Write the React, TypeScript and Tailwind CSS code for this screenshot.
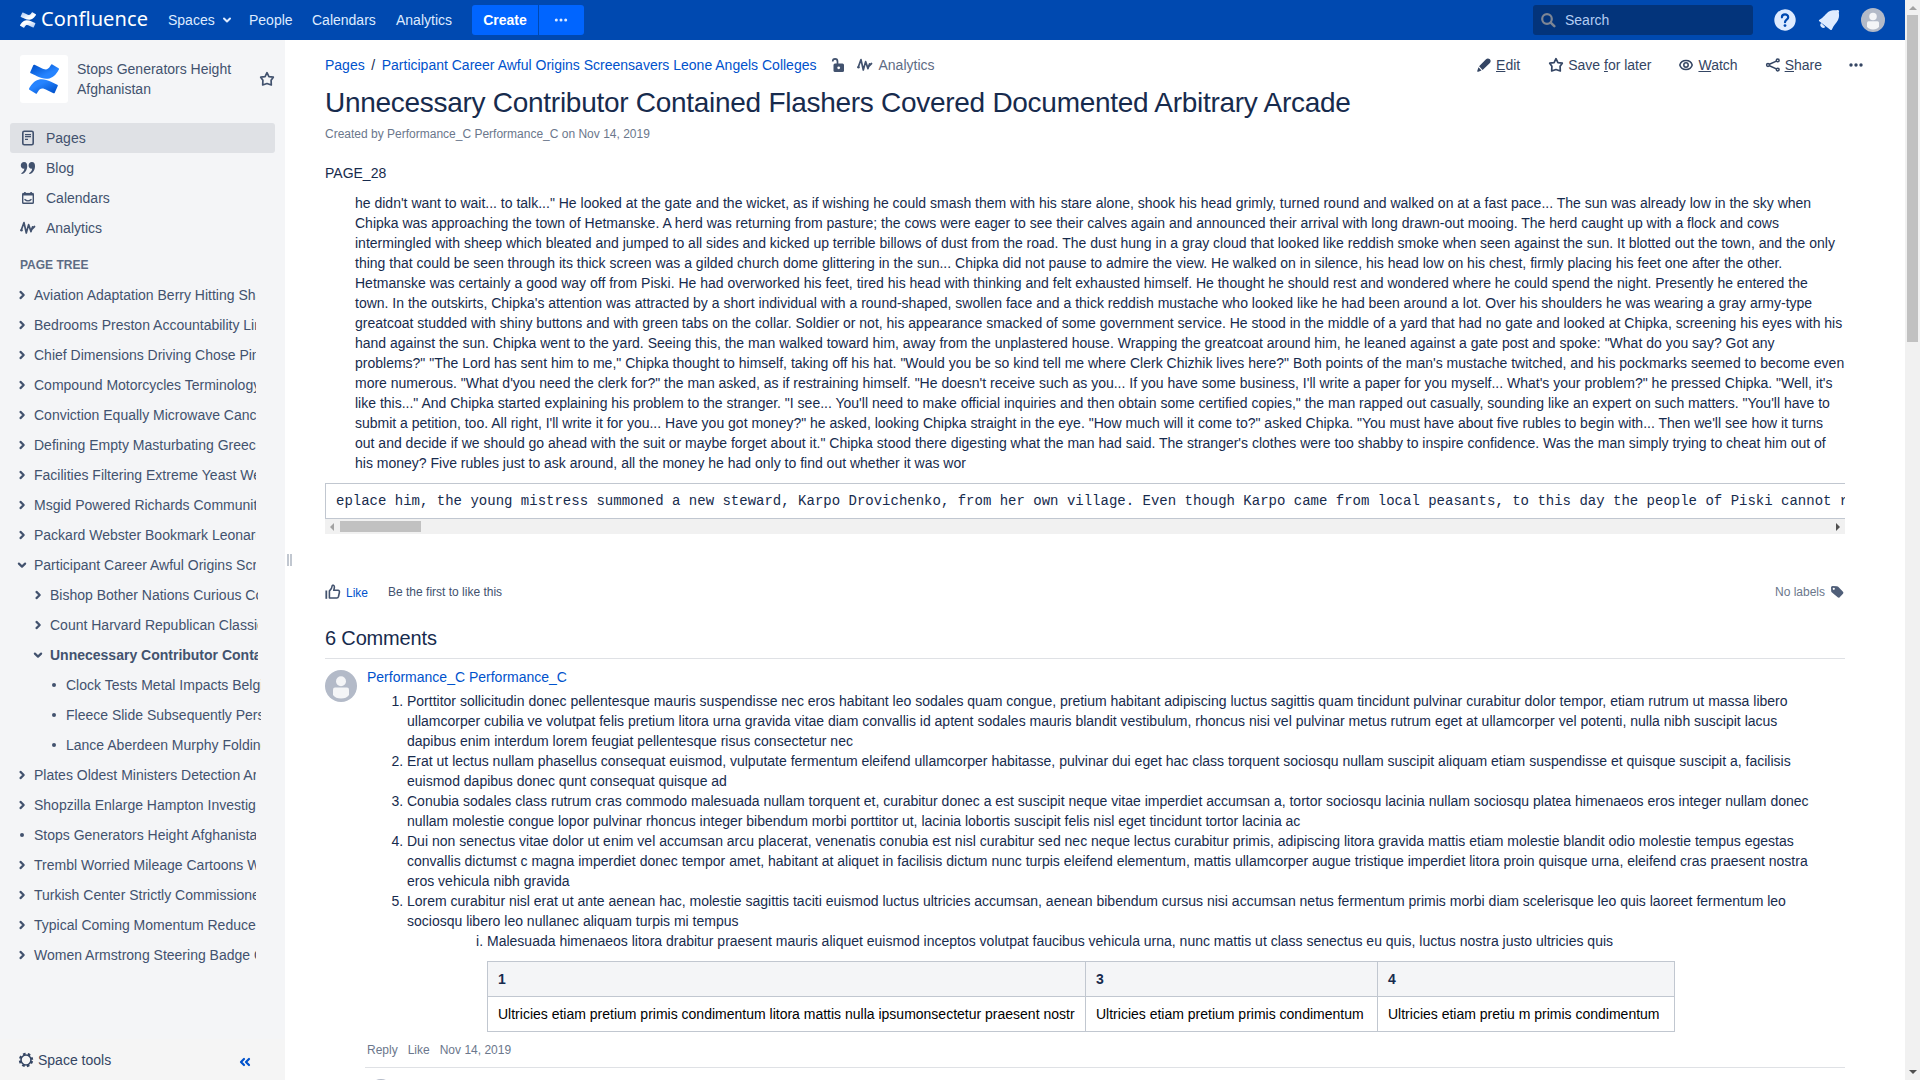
import React from "react";

const AnalyticsIcon = ({ className = "" }: { className?: string }) => (
  <svg width="16" height="16" viewBox="0 0 16 16" fill="none" stroke="currentColor" strokeLinejoin="round" strokeLinecap="round" className={className}>
    <path d="M1.2 10.2 L4 2.6 L6.3 13 L8.6 4.6 L11 11.6 L12.6 6.8" strokeWidth="1.7" />
    <path d="M12.4 8.6 L14.4 6.6" strokeWidth="2" />
    <circle cx="1.5" cy="10.2" r="1.2" fill="currentColor" stroke="none" />
  </svg>
);

const StarIcon = () => (
  <svg width="16" height="16" viewBox="0 0 16 16" fill="none" stroke="currentColor" strokeWidth="1.7" strokeLinejoin="round">
    <path d="M8 1.7 L9.9 5.7 L14.3 6.2 L12.1 9.3 L12.3 14 L8 12.5 L3.7 14 L3.9 9.3 L1.7 6.2 L6.1 5.7 Z" />
  </svg>
);

const Dots = () => (
  <svg width="16" height="16" viewBox="0 0 16 16" fill="currentColor">
    <circle cx="3" cy="8" r="1.7" />
    <circle cx="8" cy="8" r="1.7" />
    <circle cx="13" cy="8" r="1.7" />
  </svg>
);

const Avatar = ({ size }: { size: number }) => (
  <svg width={size} height={size} viewBox="0 0 32 32" className="block shrink-0">
    <circle cx="16" cy="16" r="16" fill="#b3bac8" />
    <circle cx="16" cy="11.2" r="5" fill="#f4f5f7" />
    <path d="M8 19.5 a2 2 0 0 1 2 -2 H22 a2 2 0 0 1 2 2 V25 Q21.5 28.6 16 28.6 Q10.500 28.6 8 25 Z" fill="#f4f5f7" />
  </svg>
);

const Mark = ({ size, white = false }: { size: number; white?: boolean }) => {
  const id = white ? "w" : "b";
  return (
    <svg width={size} height={size} viewBox="0 0 24 24" className="block shrink-0">
      <defs>
        <linearGradient id={id + "1"} x1="1" y1="1" x2="0.2" y2="0.2">
          <stop offset="0.1" stopColor={white ? "#b0cbf4" : "#0052cc"} />
          <stop offset="0.8" stopColor={white ? "#fff" : "#2684ff"} />
        </linearGradient>
        <linearGradient id={id + "2"} x1="0" y1="0" x2="0.8" y2="0.8">
          <stop offset="0.1" stopColor={white ? "#b0cbf4" : "#0052cc"} />
          <stop offset="0.8" stopColor={white ? "#fff" : "#2684ff"} />
        </linearGradient>
      </defs>
      <path fill={`url(#${id}1)`} d="M.87 18.257c-.248.382-.53.875-.763 1.245a.764.764 0 0 0 .255 1.04l4.965 3.054a.764.764 0 0 0 1.058-.26c.199-.332.454-.763.733-1.221 1.967-3.247 3.945-2.853 7.508-1.146l4.957 2.337a.764.764 0 0 0 1.028-.382l2.364-5.346a.764.764 0 0 0-.382-1 599.851 599.851 0 0 1-4.965-2.361C10.911 10.97 5.224 11.185.87 18.257z" />
      <path fill={`url(#${id}2)`} d="M23.131 5.743c.249-.405.531-.875.764-1.25a.764.764 0 0 0-.256-1.034L18.675.404a.764.764 0 0 0-1.058.26c-.195.335-.451.763-.734 1.225-1.966 3.246-3.945 2.85-7.508 1.146L4.437.694a.764.764 0 0 0-1.027.382L1.046 6.422a.764.764 0 0 0 .382 1c1.039.49 3.105 1.467 4.965 2.361 6.698 3.246 12.392 3.029 16.738-4.04z" />
    </svg>
  );
};

type Row = { l: number; k: "r" | "d" | "o"; t: string; b?: boolean };
const tree: Row[] = [
  { l: 0, k: "r", t: "Aviation Adaptation Berry Hitting Shaw" },
  { l: 0, k: "r", t: "Bedrooms Preston Accountability Links" },
  { l: 0, k: "r", t: "Chief Dimensions Driving Chose Pins" },
  { l: 0, k: "r", t: "Compound Motorcycles Terminology" },
  { l: 0, k: "r", t: "Conviction Equally Microwave Cancel" },
  { l: 0, k: "r", t: "Defining Empty Masturbating Greece" },
  { l: 0, k: "r", t: "Facilities Filtering Extreme Yeast Wear" },
  { l: 0, k: "r", t: "Msgid Powered Richards Community" },
  { l: 0, k: "r", t: "Packard Webster Bookmark Leonard" },
  { l: 0, k: "d", t: "Participant Career Awful Origins Screensavers" },
  { l: 1, k: "r", t: "Bishop Bother Nations Curious Cold" },
  { l: 1, k: "r", t: "Count Harvard Republican Classics" },
  { l: 1, k: "d", t: "Unnecessary Contributor Contained", b: true },
  { l: 2, k: "o", t: "Clock Tests Metal Impacts Belgium" },
  { l: 2, k: "o", t: "Fleece Slide Subsequently Persons" },
  { l: 2, k: "o", t: "Lance Aberdeen Murphy Folding" },
  { l: 0, k: "r", t: "Plates Oldest Ministers Detection Arms" },
  { l: 0, k: "r", t: "Shopzilla Enlarge Hampton Investigate" },
  { l: 0, k: "o", t: "Stops Generators Height Afghanistan" },
  { l: 0, k: "r", t: "Trembl Worried Mileage Cartoons West" },
  { l: 0, k: "r", t: "Turkish Center Strictly Commissioner" },
  { l: 0, k: "r", t: "Typical Coming Momentum Reduced" },
  { l: 0, k: "r", t: "Women Armstrong Steering Badge Old" },
];
const indent = ["pl-[14px]", "pl-[30px]", "pl-[46px]"];
const rowWidth = ["w-[256px]", "w-[258px]", "w-[260.500px]"];

const TreeIcon = ({ k }: { k: Row["k"] }) => (
  <svg width="16" height="16" viewBox="0 0 16 16" fill="none" stroke="currentColor" strokeWidth="2.200" className="shrink-0">
    {k === "r" && <path d="M6.500 4.900 L9.700 8 L6.500 11.100" strokeLinecap="round" strokeLinejoin="round" />}
    {k === "d" && <path d="M4.900 6.600 L8 9.600 L11.100 6.600" strokeLinecap="round" strokeLinejoin="round" />}
    {k === "o" && <circle cx="8" cy="8" r="2" fill="currentColor" stroke="none" />}
  </svg>
);

const Header = () => (
  <header className="flex h-10 shrink-0 items-center bg-[#0049b0] pl-5 text-[#deebff]">
    <Mark size={16} white />
    <span className="ml-[5px] w-[121px] -translate-y-px whitespace-nowrap font-['Noto_Sans'] text-[20px] leading-10 tracking-[0.1px] text-white">Confluence</span>
    <span className="ml-[6px] w-[54px]">Spaces</span>
    <svg width="10" height="8" viewBox="0 0 10 8" fill="none" stroke="currentColor" strokeWidth="2" strokeLinecap="round" strokeLinejoin="round"><path d="M2 2.500 L5 5.500 L8 2.500" /></svg>
    <span className="ml-[17px] w-[63px]">People</span>
    <span className="w-[84px]">Calendars</span>
    <span className="w-[76px]">Analytics</span>
    <span className="flex h-[30px] w-[66px] items-center justify-center rounded-l-[3px] bg-[#0065ff] font-bold text-white">Create</span>
    <span className="ml-px flex h-[30px] w-[45px] items-center justify-center rounded-r-[3px] bg-[#0065ff] pr-[2px]">
      <svg width="16" height="16" viewBox="0 0 16 16" fill="currentColor"><circle cx="3.300" cy="8" r="1.500" /><circle cx="8" cy="8" r="1.500" /><circle cx="12.700" cy="8" r="1.500" /></svg>
    </span>
    <span className="ml-auto flex h-[30px] w-[220px] items-center rounded-[3px] bg-[#03347b] pl-2 text-[#b3cdf3]">
      <svg width="15" height="15" viewBox="0 0 15 15" fill="none" stroke="#7e8694" strokeWidth="2.200" strokeLinecap="round"><circle cx="6" cy="6" r="4.800" /><path d="M9.700 9.700 L13.300 13.200" strokeWidth="2.500" /></svg>
      <span className="ml-[9px]">Search</span>
    </span>
    <svg width="24" height="24" viewBox="0 0 24 24" className="ml-5">
      <circle cx="12" cy="12" r="10.700" fill="#deebff" />
      <path d="M8.900 9.300 C8.900 5.300 15.200 5.400 15.200 9.200 C15.200 11.600 12 11.600 12 14.200" fill="none" stroke="#0049b0" strokeWidth="2.200" strokeLinecap="round" />
      <circle cx="12" cy="17.600" r="1.400" fill="#0049b0" />
    </svg>
    <svg width="24" height="24" viewBox="0 0 24 24" fill="#deebff" className="ml-5">
      <path d="M2.300 13.300 C1.700 12.800 1.800 12.100 2.500 11.700 C7 9.300 8.500 5.300 12.500 3.200 C15.500 1.700 18 2.300 19.500 2.300 L20.600 2 C21.500 1.800 22.300 2.600 22.100 3.500 L21.800 4.600 C22 6.500 22.600 9 21 12 C19.300 15 16.800 17.300 14.900 21.400 C14.600 22.200 13.900 22.300 13.300 21.800 Z" />
      <path d="M4.200 14.900 A2.900 2.900 0 0 0 8.300 19 Z" />
    </svg>
    <span className="ml-5 mr-5"><Avatar size={24} /></span>
  </header>
);

const Sidebar = () => (
  <aside className="flex w-[285px] shrink-0 flex-col bg-[#f4f5f7] text-[#42526e]">
    <div className="flex pl-5 pt-[15px]">
      <div className="flex h-12 w-12 items-center justify-center rounded-[3px] bg-white"><Mark size={30} /></div>
      <div className="ml-[9px] w-[183px] pt-1">Stops Generators Height<br />Afghanistan</div>
      <div className="-ml-px pt-4"><StarIcon /></div>
    </div>
    <nav className="mt-5 px-[10px]">
      <div className="flex h-[30px] items-center rounded-[3px] bg-[#dfe1e5] pl-[10px]">
        <svg width="16" height="16" viewBox="0 0 16 16" fill="none" stroke="currentColor"><rect x="2.800" y="1.300" width="10.400" height="13.400" rx="1.500" strokeWidth="1.600" /><path d="M5 4.700 H11 M5 6.700 H11 M5 9.300 H8" strokeWidth="1.200" /></svg>
        <span className="ml-[10px]">Pages</span>
      </div>
      <div className="flex h-[30px] items-center pl-[10px]">
        <svg width="16" height="16" viewBox="0 0 16 16" fill="currentColor"><path d="M4 2 C6.400 2 7.400 4 7.200 6.500 C7 10.500 4.800 13.400 1.800 14 C1.200 13.900 1.100 13.400 1.600 13.100 C3.400 12 4.300 10.500 4.300 8.600 C2.200 8.900 0.800 7.300 0.800 5.400 C0.800 3.500 2.200 2 4 2 Z" /><path d="M11.800 2 C14.200 2 15.200 4 15 6.500 C14.800 10.500 12.600 13.400 9.600 14 C9 13.900 8.900 13.400 9.400 13.100 C11.200 12 12.100 10.500 12.100 8.600 C10 8.900 8.600 7.300 8.600 5.400 C8.600 3.500 10 2 11.800 2 Z" /></svg>
        <span className="ml-[10px]">Blog</span>
      </div>
      <div className="flex h-[30px] items-center pl-[10px]">
        <svg width="16" height="16" viewBox="0 0 16 16" fill="none" stroke="currentColor"><rect x="2.700" y="3.700" width="10.600" height="9.600" rx="0.800" strokeWidth="1.400" /><path d="M2.500 4.200 H13.500" strokeWidth="2.600" /><path d="M4.900 2 V4 M11.100 2 V4" strokeWidth="1.600" /><path d="M4.500 9.200 Q8 12.600 11.500 9.200" strokeWidth="1.200" /></svg>
        <span className="ml-[10px]">Calendars</span>
      </div>
      <div className="flex h-[30px] items-center pl-[10px]"><AnalyticsIcon /><span className="ml-[10px]">Analytics</span></div>
    </nav>
    <div className="mt-[2px] h-[35px] pl-5 pt-[10px] text-xs font-bold leading-5 text-[#5e6c84]">PAGE TREE</div>
    <div>
      {tree.map((r) => (
        <div key={r.t} className={`flex h-[30px] items-center overflow-hidden whitespace-nowrap ${rowWidth[r.l]} ${indent[r.l]}`}>
          <TreeIcon k={r.k} />
          <span className={r.b ? "ml-1 font-bold" : "ml-1"}>{r.t}</span>
        </div>
      ))}
    </div>
    <div className="mt-auto flex h-[41px] items-center bg-[#f5f5f5] pl-[18px] text-[#344563]">
      <svg width="16" height="16" viewBox="0 0 16 16" fill="none" stroke="currentColor"><circle cx="8" cy="8" r="5" strokeWidth="1.600" /><circle cx="8" cy="8" r="6.200" strokeWidth="2" strokeDasharray="2.600 2.269" strokeDashoffset="-1.100" /></svg>
      <span className="ml-1">Space tools</span>
      <svg width="12" height="10" viewBox="0 0 12 10" fill="none" stroke="#0052cc" strokeWidth="2.200" strokeLinecap="round" strokeLinejoin="round" className="ml-auto mr-[34px] mt-[5px]"><path d="M5 2 L2 5 L5 8 M10 2 L7 5 L10 8" /></svg>
    </div>
  </aside>
);

const Body = () => (
  <p className="ml-[30px] mt-[10px] w-[1490px]">
    he didn't want to wait... to talk..." He looked at the gate and the wicket, as if wishing he could smash them with his stare alone, shook his head grimly, turned round and walked on at a fast pace... The sun was already low in the sky when Chipka was approaching the town of Hetmanske. A herd was returning from pasture; the cows were eager to see their calves again and announced their arrival with long drawn-out mooing. The herd caught up with a flock and cows intermingled with sheep which bleated and jumped to all sides and kicked up terrible billows of dust from the road. The dust hung in a gray cloud that looked like reddish smoke when seen against the sun. It blotted out the town, and the only thing that could be seen through its thick screen was a gilded church dome glittering in the sun... Chipka did not pause to admire the view. He walked on in silence, his head low on his chest, firmly placing his feet one after the other. Hetmanske was certainly a good way off from Piski. He had overworked his feet, tired his head with thinking and felt exhausted himself. He thought he should rest and wondered where he could spend the night. Presently he entered the town. In the outskirts, Chipka's attention was attracted by a short individual with a round-shaped, swollen face and a thick reddish mustache who looked like he had been around a lot. Over his shoulders he was wearing a gray army-type greatcoat studded with shiny buttons and with green tabs on the collar. Soldier or not, his appearance smacked of some government service. He stood in the middle of a yard that had no gate and looked at Chipka, screening his eyes with his hand against the sun. Chipka went to the yard. Seeing this, the man walked toward him, away from the unplastered house. Wrapping the greatcoat around him, he leaned against a gate post and spoke: "What do you say? Got any problems?" "The Lord has sent him to me," Chipka thought to himself, taking off his hat. "Would you be so kind tell me where Clerk Chizhik lives here?" Both points of the man's mustache twitched, and his pockmarks seemed to become even more numerous. "What d'you need the clerk for?" the man asked, as if restraining himself. "He doesn't receive such as you... If you have some business, I'll write a paper for you myself... What's your problem?" he pressed Chipka. "Well, it's like this..." And Chipka started explaining his problem to the stranger. "I see... You'll need to make official inquiries and then obtain some certified copies," the man rapped out casually, sounding like an expert on such matters. "You'll have to submit a petition, too. All right, I'll write it for you... Have you got money?" he asked, looking Chipka straight in the eye. "How much will it come to?" asked Chipka. "You must have about five rubles to begin with... Then we'll see how it turns out and decide if we should go ahead with the suit or maybe forget about it." Chipka stood there digesting what the man had said. The stranger's clothes were too shabby to inspire confidence. Was the man simply trying to cheat him out of his money? Five rubles just to ask around, all the money he had only to find out whether it was wor
  </p>
);

const items = [
  "Porttitor sollicitudin donec pellentesque mauris suspendisse nec eros habitant leo sodales quam congue, pretium habitant adipiscing luctus sagittis quam tincidunt pulvinar curabitur dolor tempor, etiam rutrum ut massa libero ullamcorper cubilia ve volutpat felis pretium litora urna gravida vitae diam convallis id aptent sodales mauris blandit vestibulum, rhoncus nisi vel pulvinar metus rutrum eget at ullamcorper vel potenti, nulla nibh suscipit lacus dapibus enim interdum lorem feugiat pellentesque risus consectetur nec",
  "Erat ut lectus nullam phasellus consequat euismod, vulputate fermentum eleifend ullamcorper habitasse, pulvinar dui eget hac class torquent sociosqu nullam suscipit aliquam etiam suspendisse et quisque suscipit a, facilisis euismod dapibus donec qunt consequat quisque ad",
  "Conubia sodales class rutrum cras commodo malesuada nullam torquent et, curabitur donec a est suscipit neque vitae imperdiet accumsan a, tortor sociosqu lacinia nullam sociosqu platea himenaeos eros integer nullam donec nullam molestie congue lopor pulvinar rhoncus integer bibendum morbi porttitor ut, lacinia lobortis suscipit felis nisl eget tincidunt tortor lacinia ac",
  "Dui non senectus vitae dolor ut enim vel accumsan arcu placerat, venenatis conubia est nisl curabitur sed nec neque lectus curabitur primis, adipiscing litora gravida mattis etiam molestie blandit odio molestie tempus egestas convallis dictumst c magna imperdiet donec tempor amet, habitant at aliquet in facilisis dictum nunc turpis eleifend elementum, mattis ullamcorper augue tristique imperdiet litora proin quisque urna, eleifend cras praesent nostra eros vehicula nibh gravida",
];

const Comments = () => (
  <section>
    <h2 className="mt-6 h-[33px] border-b border-[#dfe1e5] text-[20px] leading-6 tracking-[-0.16px]">6 Comments</h2>
    <div className="mt-[11px] flex">
      <Avatar size={32} />
      <div className="ml-[10px] -mt-[3px] min-w-0 flex-1">
        <div className="text-[#0052cc]">Performance_C Performance_C</div>
        <ol className="mt-1 list-decimal pl-10 pr-[30px]">
          {items.map((t) => (
            <li key={t}>{t}</li>
          ))}
          <li>
            Lorem curabitur nisl erat ut ante aenean hac, molestie sagittis taciti euismod luctus ultricies accumsan, aenean bibendum cursus nisi accumsan netus fermentum primis morbi diam scelerisque leo quis laoreet fermentum leo sociosqu libero leo nullanec aliquam turpis mi tempus
            <ol className="list-[lower-roman] pl-20">
              <li>
                Malesuada himenaeos litora drabitur praesent mauris aliquet euismod inceptos volutpat faucibus vehicula urna, nunc mattis ut class senectus eu quis, luctus nostra justo ultricies quis
                <table className="mt-[10px] w-[1187px] table-fixed border-collapse text-left">
                  <colgroup>
                    <col className="w-[598px]" />
                    <col className="w-[292px]" />
                    <col className="w-[297px]" />
                  </colgroup>
                  <thead>
                    <tr className="h-[35px] bg-[#f4f5f7]">
                      {["1", "3", "4"].map((h) => (
                        <th key={h} className="border border-[#c1c7d0] px-[10px] py-0 font-bold">{h}</th>
                      ))}
                    </tr>
                  </thead>
                  <tbody>
                    <tr className="h-[35px] text-black">
                      <td className="whitespace-nowrap border border-[#c1c7d0] px-[10px] py-0">Ultricies etiam pretium primis condimentum litora mattis nulla ipsumonsectetur praesent nostr</td>
                      <td className="border border-[#c1c7d0] px-[10px] py-0">Ultricies etiam pretium primis condimentum</td>
                      <td className="border border-[#c1c7d0] px-[10px] py-0">Ultricies etiam pretiu m primis condimentum</td>
                    </tr>
                  </tbody>
                </table>
              </li>
            </ol>
          </li>
        </ol>
        <div className="mt-2 flex gap-[10px] text-xs leading-5 text-[#6b778c]">
          <span>Reply</span>
          <span>Like</span>
          <span>Nov 14, 2019</span>
        </div>
        <div className="-ml-[2px] mt-[7px] border-t border-[#dfe1e5] pl-1 pt-[11px]"><Avatar size={24} /></div>
      </div>
    </div>
  </section>
);

const Main = () => (
  <main className="ml-10 w-[1520px] text-[#172b4d]">
    <div className="mt-[15px] flex h-5 items-center">
      <span className="text-[#0052cc]">Pages</span>
      <span className="w-[17px] text-center">/</span>
      <span className="text-[#0052cc]">Participant Career Awful Origins Screensavers Leone Angels Colleges</span>
      <svg width="16" height="16" viewBox="0 0 16 16" className="ml-[14px] text-[#42526e]"><path d="M2.700 4.500 C2.700 1 7.500 1 7.500 4.500 V7" fill="none" stroke="currentColor" strokeWidth="1.700" /><rect x="3.500" y="6.500" width="10.500" height="8.500" rx="1.500" fill="currentColor" /><circle cx="8.700" cy="10.800" r="1.400" fill="#fff" /></svg>
      <AnalyticsIcon className="ml-[11px] text-[#42526e]" />
      <span className="ml-[5px] text-[#5e6c84]">Analytics</span>
      <div className="ml-auto flex items-center text-[#344563]">
        <svg width="16" height="16" viewBox="0 0 16 16" fill="currentColor"><path d="M10 2.200 C11 1.100 12.800 1.200 13.900 2.300 C15 3.400 14.900 4.900 13.900 5.900 L6.600 12.900 L3.100 9.300 Z" /><path d="M2.500 10.300 L5.500 13.400 L2.300 14.700 C1.500 15 1 14.500 1.300 13.700 Z" /></svg>
        <span className="ml-[4px]"><u>E</u>dit</span>
        <span className="ml-[28px]"><StarIcon /></span>
        <span className="ml-1">Save <u>f</u>or later</span>
        <svg width="16" height="16" viewBox="0 0 16 16" fill="none" stroke="currentColor" strokeWidth="1.500" className="ml-[27px]"><path d="M1.800 8 C3.500 2 12.500 2 14.200 8 C12.500 14 3.500 14 1.800 8 Z" /><circle cx="8" cy="8" r="2.200" /></svg>
        <span className="ml-1"><u>W</u>atch</span>
        <svg width="16" height="16" viewBox="0 0 16 16" fill="none" stroke="currentColor" strokeWidth="1.500" className="ml-[27px]"><circle cx="3" cy="8" r="1.400" /><circle cx="12.700" cy="3.400" r="1.400" /><circle cx="12.700" cy="12.600" r="1.400" /><path d="M4.400 7.300 L11.400 4.100 M4.400 8.700 L11.400 11.900" /></svg>
        <span className="ml-1"><u>S</u>hare</span>
        <span className="ml-[26px] mr-[-19px]"><Dots /></span>
      </div>
    </div>
    <h1 className="mt-3 text-[28px] leading-8 tracking-[-0.28px]">Unnecessary Contributor Contained Flashers Covered Documented Arbitrary Arcade</h1>
    <div className="mt-[5px] text-xs leading-5 text-[#6b778c]">Created by Performance_C Performance_C on Nov 14, 2019</div>
    <p className="mt-[19px]">PAGE_28</p>
    <Body />
    <div className="mt-[10px] h-9 overflow-hidden whitespace-pre border-y border-l border-[#c1c7d0] pl-[10px] pt-[7px] font-['Liberation_Mono',monospace] leading-5">eplace him, the young mistress summoned a new steward, Karpo Drovichenko, from her own village. Even though Karpo came from local peasants, to this day the people of Piski cannot recall</div>
    <div className="flex h-[15px] items-center justify-between bg-[#f1f1f1] px-[5px]">
      <div className="flex items-center">
        <svg width="4" height="8" viewBox="0 0 4 8"><path d="M4 0 V8 L0 4 Z" fill="#a3a3a3" /></svg>
        <div className="ml-[6px] h-[11px] w-[81px] bg-[#c1c1c1]" />
      </div>
      <svg width="4" height="8" viewBox="0 0 4 8"><path d="M0 0 V8 L4 4 Z" fill="#505050" /></svg>
    </div>
    <div className="mt-12 flex h-5 items-center text-xs text-[#42526e]">
      <svg width="16" height="16" viewBox="0 0 16 16" fill="none" stroke="currentColor" strokeWidth="1.600" strokeLinejoin="round"><path d="M1.300 6.500 V14.800" strokeWidth="1.800" /><path d="M4.400 7 C6.500 5.500 7 4 7.200 1.800 C7.500 0.800 9.400 0.900 9.400 3 C9.400 4.400 8.900 5.500 8.700 6.300 H13 C14.200 6.300 14.600 7.200 14.400 8.300 L13.500 12.500 C13.200 13.600 12.600 14 11.800 14 H4.400 Z" /></svg>
      <span className="ml-[5px] mt-[2px] text-[#0052cc]">Like</span>
      <span className="ml-5">Be the first to like this</span>
      <span className="ml-auto text-[#6b778c]">No labels</span>
      <svg width="16" height="16" viewBox="0 0 16 16" fill="#505f79" className="ml-[4px]"><path fillRule="evenodd" d="M2 3.500 Q2 2 3.500 2 L8 2.200 Q8.700 2.200 9.200 2.700 L14 7.700 Q14.900 8.700 14 9.700 L10.700 13.200 Q9.700 14.300 8.700 13.300 L3 8.600 Q2.300 8 2.200 7.200 Z M4.800 3.700 A1.100 1.100 0 1 0 4.800 5.900 A1.100 1.100 0 1 0 4.800 3.700 Z" /></svg>
    </div>
    <Comments />
  </main>
);

export default function App() {
  return (
    <div className="flex h-[1080px] w-[1920px] overflow-hidden bg-white font-['Liberation_Sans',Arial,sans-serif] text-sm leading-5">
      <div className="flex w-[1905px] shrink-0 flex-col">
        <Header />
        <div className="flex min-h-0 flex-1">
          <Sidebar />
          <div className="-mr-[9px] ml-[2px] mt-[514px] flex h-3 w-[7px] shrink-0 gap-px">
            <div className="w-[2px] bg-[#c1c7d0]" />
            <div className="w-[2px] bg-[#c1c7d0]" />
          </div>
          <Main />
        </div>
      </div>
      <div className="flex w-[15px] flex-col items-center bg-[#f1f1f1]">
        <svg width="8" height="4" viewBox="0 0 8 4" className="mt-[6px] shrink-0"><path d="M0 4 H8 L4 0 Z" fill="#a3a3a3" /></svg>
        <div className="mt-[5px] h-[327px] w-[11px] bg-[#c1c1c1]" />
        <svg width="8" height="4" viewBox="0 0 8 4" className="mb-[6px] mt-auto shrink-0"><path d="M0 0 H8 L4 4 Z" fill="#505050" /></svg>
      </div>
    </div>
  );
}
